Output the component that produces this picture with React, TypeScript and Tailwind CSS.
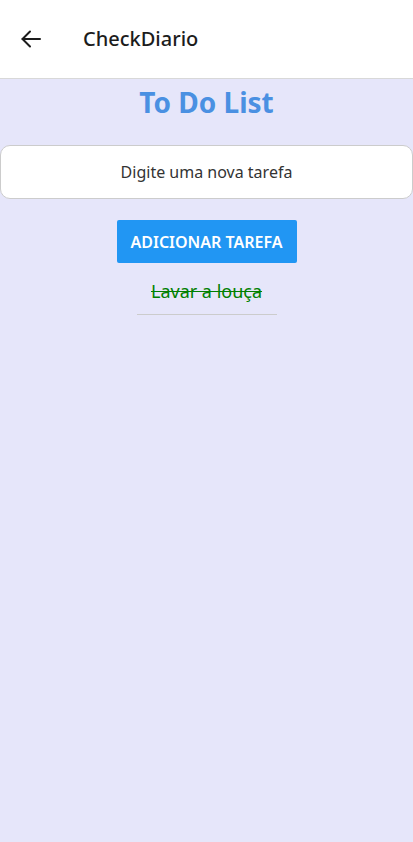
export default function App() {
  return (
    <div className="min-h-[842px] bg-[#e6e6fa] font-['Segoe_UI','Noto_Sans',sans-serif]">
      <header className="flex h-[79px] items-center border-b border-[#d8d8d8] bg-white">
        <svg className="ml-[19px] h-[24px] w-[24px]" viewBox="0 0 24 24" fill="none" stroke="#1c1c1c" strokeWidth="2" strokeLinecap="round" strokeLinejoin="round">
          <path d="M21 12H3.5" />
          <path d="M11 4.5 3.5 12l7.5 7.5" />
        </svg>
        <h1 className="ml-[40px] text-[20px] font-medium text-[#1c1c1c]">CheckDiario</h1>
      </header>
      <main className="flex flex-col items-center">
        <h2 className="mt-[5px] text-[28px] font-bold leading-[36px] text-[#4a90e2]">To Do List</h2>
        <input
          className="mt-[25px] h-[54px] w-full rounded-[10px] border border-[#cccccc] bg-white text-center text-[16px] text-[#333] outline-none placeholder:text-[#333]"
          placeholder="Digite uma nova tarefa"
        />
        <button className="mt-[21px] h-[43px] w-[180px] rounded-[2px] bg-[#2196f3] text-[16px] font-semibold text-white">
          ADICIONAR TAREFA
        </button>
        <ul className="mt-[16px]">
          <li className="w-[140px] border-b border-[#cccccc] pb-[11px] text-center text-[18px] leading-[24px] text-[#008000] line-through">
            Lavar a louça
          </li>
        </ul>
      </main>
    </div>
  );
}
